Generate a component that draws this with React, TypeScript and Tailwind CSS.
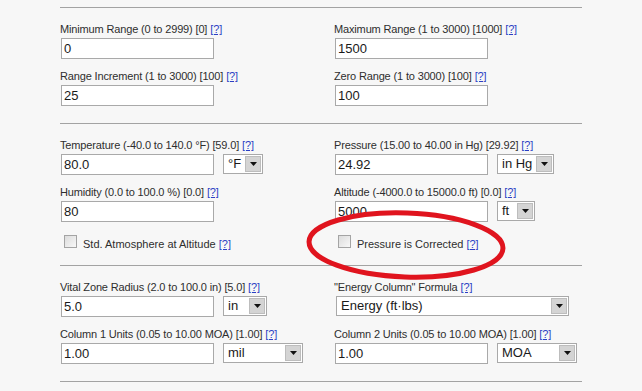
import React from 'react';

const Help: React.FC = () => (
  <a href="#" className="ml-[3px] text-[#2b3fc4] underline">[?]</a>
);

const Label: React.FC<{ text: string }> = ({ text }) => (
  <div className="h-[15px] leading-[15px] text-[11px] tracking-[-0.15px] text-[#2e2e2e] whitespace-nowrap">
    {text}
    <Help />
  </div>
);

const TextBox: React.FC<{ value: string }> = ({ value }) => (
  <input
    readOnly
    value={value}
    className="w-[153px] h-[21px] border border-[#a9a9a9] bg-white pl-[2px] text-[13px] text-[#1a1a1a] outline-none"
  />
);

const Select: React.FC<{ value: string; width: string }> = ({ value, width }) => (
  <div className={`${width} h-[20px] flex items-center border border-[#a9a9a9] bg-white`}>
    <span className="pl-[4px] text-[13px] text-[#1a1a1a] whitespace-nowrap">{value}</span>
    <div className="ml-auto mr-px w-[16px] h-[16px] flex items-center justify-center border border-[#bdbdbd] bg-[#d4d4d4]">
      <svg width="7" height="4" viewBox="0 0 7 4">
        <polygon points="0,0 7,0 3.5,4" fill="#111" />
      </svg>
    </div>
  </div>
);

const Field: React.FC<{ label: string; value: string; unit?: string; unitWidth?: string }> = ({
  label,
  value,
  unit,
  unitWidth,
}) => (
  <div>
    <Label text={label} />
    <div className="mt-px ml-px flex items-start gap-[9px]">
      <TextBox value={value} />
      {unit && unitWidth && <Select value={unit} width={unitWidth} />}
    </div>
  </div>
);

const Check: React.FC<{ text: string }> = ({ text }) => (
  <div className="mt-[3px] ml-[4px] h-[13px] flex items-start">
    <div className="w-[13px] h-[13px] border border-[#a4a4a4] bg-gradient-to-br from-[#dcdcdc] to-[#f8f8f8]" />
    <div className="ml-[6px] mt-[3px] leading-[13px] text-[11px] text-[#2e2e2e] whitespace-nowrap">
      {text}
      <Help />
    </div>
  </div>
);

export default function App() {
  return (
    <div className="relative w-[642px] h-[391px] overflow-hidden bg-[#f7f7f7] font-['Liberation_Sans',Arial,sans-serif]">
      <div className="ml-[60px] mt-[7px] w-[522px]">
        {/* Range */}
        <div className="border-t border-[#a3a3a3] pt-[14px] pb-[17px] grid grid-cols-[274px_248px] gap-y-[10px]">
          <Field label="Minimum Range (0 to 2999) [0]" value="0" />
          <Field label="Maximum Range (1 to 3000) [1000]" value="1500" />
          <Field label="Range Increment (1 to 3000) [100]" value="25" />
          <Field label="Zero Range (1 to 3000) [100]" value="100" />
        </div>

        {/* Atmosphere */}
        <div className="border-t border-[#a3a3a3] pt-[14px] pb-[17px] grid grid-cols-[274px_248px] gap-y-[10px]">
          <Field label="Temperature (-40.0 to 140.0 °F) [59.0]" value="80.0" unit="°F" unitWidth="w-[40px]" />
          <Field label="Pressure (15.00 to 40.00 in Hg) [29.92]" value="24.92" unit="in Hg" unitWidth="w-[57px]" />
          <Field label="Humidity (0.0 to 100.0 %) [0.0]" value="80" />
          <Field label="Altitude (-4000.0 to 15000.0 ft) [0.0]" value="5000" unit="ft" unitWidth="w-[38px]" />
          <Check text="Std. Atmosphere at Altitude" />
          <Check text="Pressure is Corrected" />
        </div>

        {/* Output */}
        <div className="border-t border-b border-[#a3a3a3] pt-[14px] pb-[17px] grid grid-cols-[274px_248px] gap-y-[10px]">
          <Field label="Vital Zone Radius (2.0 to 100.0 in) [5.0]" value="5.0" unit="in" unitWidth="w-[44px]" />
          <div>
            <Label text={'"Energy Column" Formula'} />
            <div className="mt-px ml-[2px]">
              <Select value="Energy (ft·lbs)" width="w-[233px]" />
            </div>
          </div>
          <Field label="Column 1 Units (0.05 to 10.00 MOA) [1.00]" value="1.00" unit="mil" unitWidth="w-[80px]" />
          <Field label="Column 2 Units (0.05 to 10.00 MOA) [1.00]" value="1.00" unit="MOA" unitWidth="w-[80px]" />
        </div>
      </div>

      {/* hand-drawn annotation */}
      <svg className="absolute left-[300px] top-[205px]" width="215" height="80" viewBox="0 0 215 80">
        <ellipse cx="106" cy="40" rx="97" ry="32" fill="none" stroke="#e0141e" strokeWidth="5" transform="rotate(2 106 40)" />
      </svg>
    </div>
  );
}
